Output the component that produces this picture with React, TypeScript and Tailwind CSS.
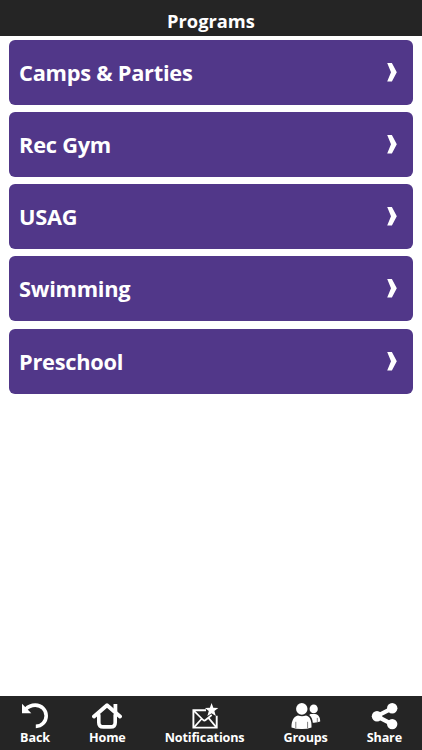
import type { ReactNode } from 'react';

const programs = ['Camps & Parties', 'Rec Gym', 'USAG', 'Swimming', 'Preschool'];

function BackIcon() {
  return (
    <svg width="30" height="28" viewBox="0 0 30 28" fill="none">
      <path d="M2 1.7 V11.3 H11.3 Z" fill="white" />
      <path d="M5.6 7.2 C8 4.7 11.4 3.1 15.3 3.1 C21.5 3.1 26.2 7.8 26.2 13.8 C26.2 19.8 21.6 24.4 15.8 24.4" stroke="white" strokeWidth="3.6" />
    </svg>
  );
}

function HomeIcon() {
  return (
    <svg width="30" height="28" viewBox="0 0 30 28" fill="none" stroke="white" strokeLinecap="round" strokeLinejoin="round">
      <path d="M2 14.4 L15 3.2 L28 14.4" strokeWidth="3.9" />
      <path d="M23.4 2 V10" strokeWidth="3.8" strokeLinecap="butt" />
      <path d="M6.8 13 V20.4 Q6.8 24.9 11.3 24.9 H18.7 Q23.2 24.9 23.2 20.4 V13" strokeWidth="3.6" />
    </svg>
  );
}

function NotificationsIcon() {
  return (
    <svg width="30" height="28" viewBox="0 0 30 28" fill="none">
      <path d="M16 8.3 H3.4 V25.6 H26.7 V13.8" stroke="white" strokeWidth="1.9" />
      <path d="M4 8.8 L13.2 18 Q14.4 19.1 15.6 18 L21.7 13 M4 25.4 L11.7 16.8 M26.4 25.4 L18.7 16.1" stroke="white" strokeWidth="1.7" />
      <path d="M21.6 1 L23.3 5.8 L28.3 6 L24.4 9.1 L25.8 14 L21.6 11.2 L17.4 14 L18.8 9.1 L14.9 6 L19.9 5.8 Z" fill="white" />
    </svg>
  );
}

function GroupsIcon() {
  return (
    <svg width="30" height="28" viewBox="0 0 30 28" fill="white">
      <ellipse cx="22.7" cy="6.9" rx="4.1" ry="4.4" />
      <path d="M19.5 11.9 H24 C27.5 12.4 29.4 15.4 29.2 19.6 Q26 21 21.8 20.7 C21.5 17.4 20.5 14.7 18.2 13 Z" />
      <ellipse cx="10.8" cy="6.9" rx="5.7" ry="5.9" />
      <path d="M7 13.4 Q11 14.9 15 13.4 C19 14.1 20.9 18.6 20.5 25.4 Q16 27.2 10.8 27.1 Q5 27.2 .5 25.4 C.3 18.6 2.9 14.1 7 13.4Z" />
      <path d="M4.8 19.8 V26.2 M16.6 19.8 V26.2 M26.3 15.9 V20.2" stroke="#252525" strokeWidth=".6" fill="none" />
    </svg>
  );
}

function ShareIcon() {
  return (
    <svg width="30" height="28" viewBox="0 0 30 28" fill="white">
      <path d="M23 6.3 L7.7 14.2 L23 22.1" fill="none" stroke="white" strokeWidth="4.2" />
      <circle cx="23.2" cy="6.3" r="5.2" />
      <circle cx="8" cy="14.2" r="5.2" />
      <circle cx="23.2" cy="22.1" r="5.2" />
    </svg>
  );
}

function NavItem({ label, children }: { label: string; children: ReactNode }) {
  return (
    <button className="flex flex-col items-center">
      {children}
      <span className="text-[12.6px] leading-4 tracking-[-0.15px]">{label}</span>
    </button>
  );
}

export default function App() {
  return (
    <div className="flex h-screen flex-col bg-white font-['Open_Sans',sans-serif] font-bold text-white">
      <header className="flex h-9 shrink-0 items-center justify-center bg-[#252525] pt-1.5">
        <h1 className="text-[18.3px] leading-6">Programs</h1>
      </header>
      <main className="flex flex-1 flex-col gap-[7.25px] px-[9px] pt-[3.5px]">
        {programs.map((name) => (
          <button key={name} className="flex h-[65px] items-center justify-between rounded-md bg-[#513789] pr-4 pl-2.5 text-left">
            <span className="pt-px text-[21.8px] leading-8 tracking-[-0.25px]">{name}</span>
            <svg width="10" height="19" viewBox="0 0 10 19" fill="white">
              <path d="M.2 0 H4.9 L9.8 9.2 L4.9 18.4 H.2 L4 9.2 Z" />
            </svg>
          </button>
        ))}
      </main>
      <footer className="flex h-[54.5px] shrink-0 items-start justify-between bg-[#252525] px-5 pt-[6.5px]">
        <NavItem label="Back"><BackIcon /></NavItem>
        <NavItem label="Home"><HomeIcon /></NavItem>
        <NavItem label="Notifications"><NotificationsIcon /></NavItem>
        <NavItem label="Groups"><GroupsIcon /></NavItem>
        <NavItem label="Share"><ShareIcon /></NavItem>
      </footer>
    </div>
  );
}
